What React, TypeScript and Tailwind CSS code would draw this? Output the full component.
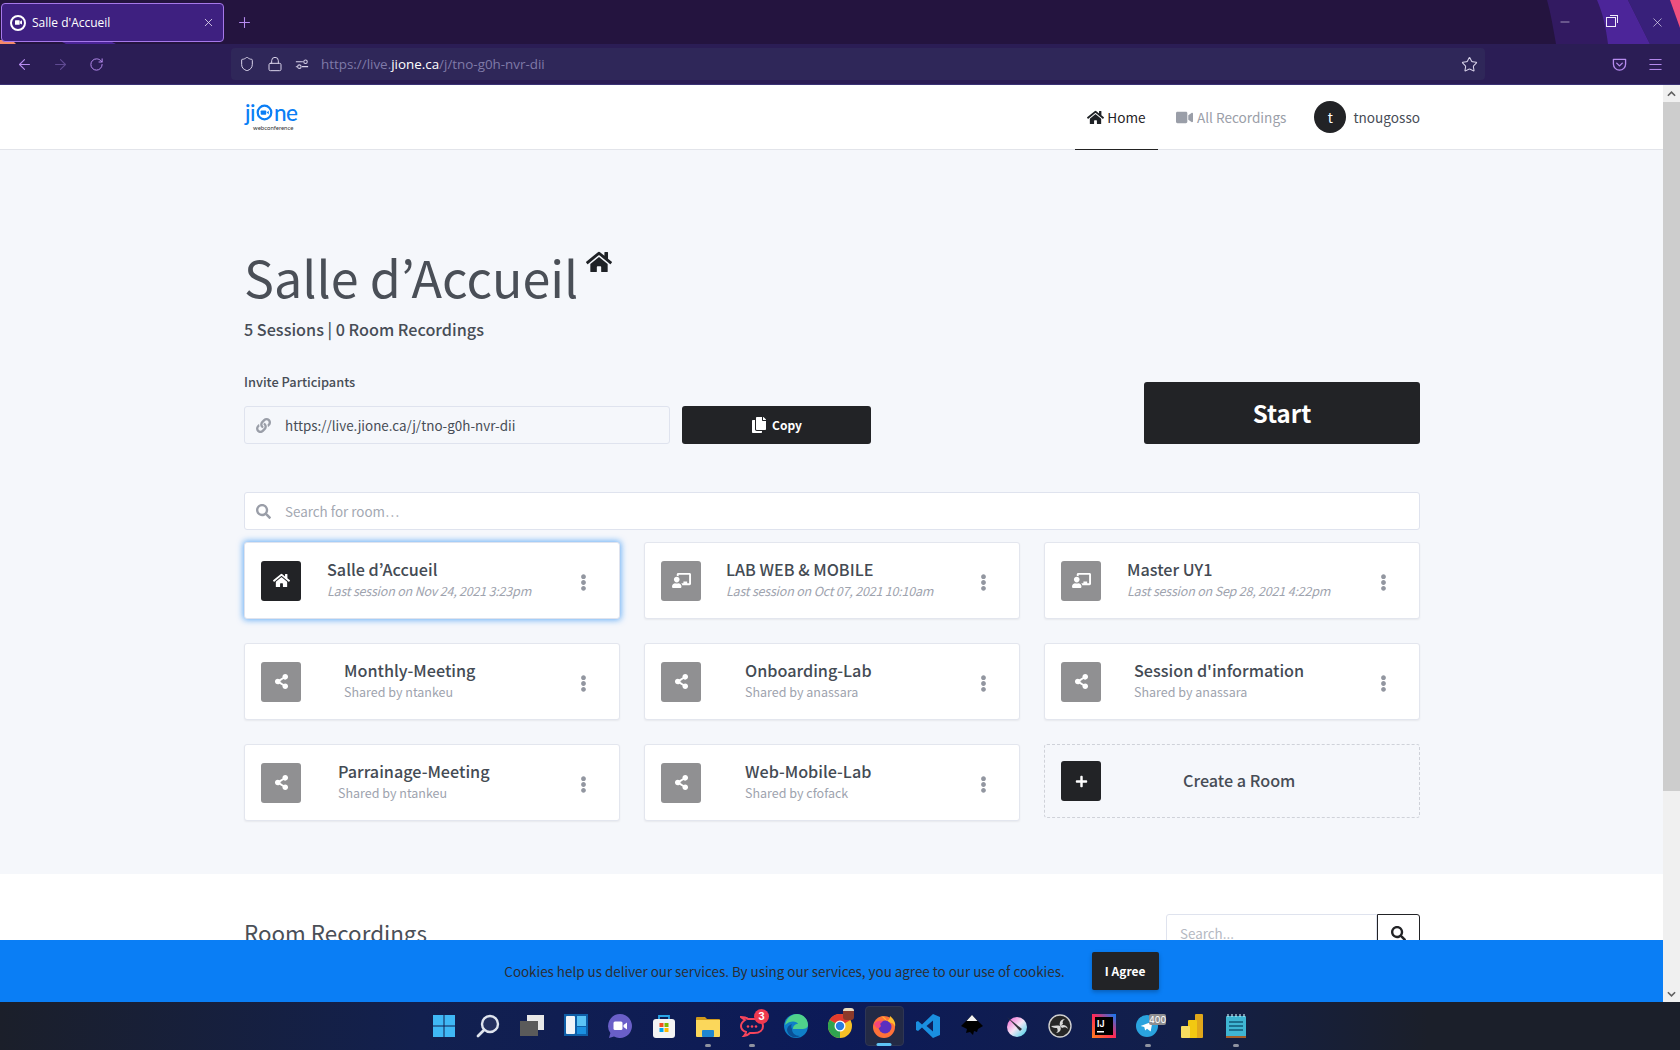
import { ArrowLeft, ArrowRight, Lock, Menu, Minus, Plus, RotateCw, Shield, Star, X } from "lucide-react";
import { FaChalkboardTeacher, FaCopy, FaEllipsisV, FaHome, FaLink, FaPlus, FaSearch, FaShareAlt, FaVideo } from "react-icons/fa";

const font = "font-['Noto_Sans_CJK_KR','Source_Sans_Pro',sans-serif]";

type Room = {
  name: string;
  sub: string;
  kind: "home" | "own" | "shared";
  textClass: string;
};

const rooms: Room[] = [
  { name: "Salle d’Accueil", sub: "Last session on Nov 24, 2021 3:23pm", kind: "home", textClass: "ml-[26px]" },
  { name: "LAB WEB & MOBILE", sub: "Last session on Oct 07, 2021 10:10am", kind: "own", textClass: "ml-[25px]" },
  { name: "Master UY1", sub: "Last session on Sep 28, 2021 4:22pm", kind: "own", textClass: "ml-[26px]" },
  { name: "Monthly-Meeting", sub: "Shared by ntankeu", kind: "shared", textClass: "ml-[43px]" },
  { name: "Onboarding-Lab", sub: "Shared by anassara", kind: "shared", textClass: "ml-[44px]" },
  { name: "Session d'information", sub: "Shared by anassara", kind: "shared", textClass: "ml-[33px]" },
  { name: "Parrainage-Meeting", sub: "Shared by ntankeu", kind: "shared", textClass: "ml-[37px]" },
  { name: "Web-Mobile-Lab", sub: "Shared by cfofack", kind: "shared", textClass: "ml-[44px]" },
];

function RoomCard({ room }: { room: Room }) {
  const isHome = room.kind === "home";
  return (
    <div
      className={
        isHome
          ? "h-[77px] flex items-center pl-[16px] bg-white rounded-[3px] border border-[#dfe3ee] shadow-[0_0_6px_1px_rgba(10,126,245,0.6)]"
          : "h-[77px] flex items-center pl-[16px] bg-white rounded-[3px] border border-[#e3e6ee] shadow-[0_1px_2px_rgba(0,0,0,0.06)]"
      }
    >
      <div
        className={
          isHome
            ? "w-10 h-10 shrink-0 rounded-[3px] bg-[#222326] text-white flex items-center justify-center"
            : "w-10 h-10 shrink-0 rounded-[3px] bg-[#909092] text-white flex items-center justify-center"
        }
      >
        {room.kind === "home" && <FaHome size={17} />}
        {room.kind === "own" && <FaChalkboardTeacher size={19} />}
        {room.kind === "shared" && <FaShareAlt size={15} />}
      </div>
      <div className={room.textClass + " flex-1 min-w-0 -mt-[4px]"}>
        <div className="text-[16.2px] leading-[24px] font-medium text-[#444b54] whitespace-nowrap">{room.name}</div>
        <div
          className={
            room.kind === "shared"
              ? "mt-[1px] text-[12.5px] leading-[18px] text-[#9ea3ae] whitespace-nowrap"
              : "mt-[1px] text-[12.5px] leading-[18px] italic text-[#9ea3ae] whitespace-nowrap tracking-[-0.2px]"
          }
        >
          {room.sub}
        </div>
      </div>
      <FaEllipsisV size={17} className="text-[#9296a0] shrink-0 mr-[27px] mt-[3px]" />
    </div>
  );
}

function JioneLogo() {
  return (
    <div className="relative w-[54px] h-[30px] font-['Lato',sans-serif] font-medium text-[#0a7ef5]">
      <div className="absolute left-[1px] top-0 flex items-center h-[24px] text-[22.5px] leading-[24px] tracking-[-0.5px]">
        <span>ji</span>
        <svg viewBox="0 0 20 20" className="w-[17px] h-[17px] mx-[1px]">
          <circle cx="10" cy="10" r="8" fill="none" stroke="#0a7ef5" strokeWidth="2.6" />
          <rect x="5.5" y="7.5" width="6.5" height="5" rx="1" fill="#0a7ef5" />
          <path d="M12.5 10l2.5-2v4z" fill="#0a7ef5" />
        </svg>
        <span>ne</span>
      </div>
      <div className="absolute left-[9px] top-[23px] text-[6px] leading-[7px] font-normal text-[#333] whitespace-nowrap">webconference</div>
    </div>
  );
}

function TaskIcon({ children, dot }: { children: React.ReactNode; dot?: boolean }) {
  return (
    <div className="relative w-[44px] h-full flex items-center justify-center shrink-0">
      {children}
      {dot && <div className="absolute bottom-[3px] left-1/2 -translate-x-1/2 w-[6px] h-[3px] rounded-full bg-[#8f93a0]" />}
    </div>
  );
}

function Taskbar() {
  return (
    <div className="h-[48px] shrink-0 flex justify-center bg-[linear-gradient(90deg,#1b1f2a_0%,#12204f_25%,#0c1a58_50%,#121f4a_70%,#1b1f2a_85%)]">
      <div className="flex h-full items-center">
        <TaskIcon>
          <svg viewBox="0 0 24 24" className="w-6 h-6">
            <path d="M1 1h10.5v10.5H1zM12.5 1H23v10.5H12.5zM1 12.5h10.5V23H1zM12.5 12.5H23V23H12.5z" fill="#3fb8f5" />
          </svg>
        </TaskIcon>
        <TaskIcon>
          <svg viewBox="0 0 24 24" className="w-6 h-6">
            <circle cx="14" cy="10" r="8" fill="#24305f" stroke="#dfe4ee" strokeWidth="2.4" />
            <path d="M8 16l-6 6" stroke="#dfe4ee" strokeWidth="2.8" strokeLinecap="round" />
          </svg>
        </TaskIcon>
        <TaskIcon>
          <svg viewBox="0 0 24 24" className="w-6 h-6">
            <rect x="7" y="1" width="17" height="15" fill="#e8e8e8" />
            <rect x="0" y="7" width="18" height="15" fill="#5a5a5a" />
          </svg>
        </TaskIcon>
        <TaskIcon>
          <svg viewBox="0 0 24 24" className="w-6 h-6">
            <rect x="0" y="0" width="24" height="22" fill="#0f5fa8" />
            <rect x="2" y="2" width="9" height="18" rx="1" fill="#f2f4f8" />
            <rect x="13" y="2" width="9" height="10" fill="#5cc4f5" />
            <rect x="13" y="13" width="9" height="7" fill="#1b90e0" />
          </svg>
        </TaskIcon>
        <TaskIcon>
          <svg viewBox="0 0 24 24" className="w-6 h-6">
            <path d="M12 0a12 12 0 1 1-6 22.4L1 24l1.4-5A12 12 0 0 1 12 0z" fill="#6a5fc8" />
            <rect x="5.5" y="7.5" width="9" height="8.5" rx="1.5" fill="#fff" />
            <path d="M15.5 11l3.5-2.5v7L15.5 13z" fill="#fff" />
          </svg>
        </TaskIcon>
        <TaskIcon>
          <svg viewBox="0 0 24 24" className="w-6 h-6">
            <path d="M7 6V2h10v4" fill="none" stroke="#2aa6e8" strokeWidth="1.8" />
            <rect x="1" y="5" width="22" height="19" rx="3" fill="#f4f4f4" />
            <rect x="7.5" y="9" width="4" height="4" fill="#f25022" />
            <rect x="12.5" y="9" width="4" height="4" fill="#7fba00" />
            <rect x="7.5" y="14" width="4" height="4" fill="#00a4ef" />
            <rect x="12.5" y="14" width="4" height="4" fill="#ffb900" />
          </svg>
        </TaskIcon>
        <TaskIcon dot>
          <svg viewBox="0 0 24 24" className="w-6 h-6">
            <path d="M0 4a1 1 0 0 1 1-1h8l2 2h12a1 1 0 0 1 1 1v4H0z" fill="#d09a1c" />
            <path d="M0 6h24v16a1 1 0 0 1-1 1H1a1 1 0 0 1-1-1z" fill="#fbd75b" />
            <rect x="6" y="16" width="12" height="7" rx="1" fill="#1f86d0" />
          </svg>
        </TaskIcon>
        <TaskIcon dot>
          <div className="relative w-6 h-6">
            <svg viewBox="0 0 24 24" className="w-6 h-6">
              <path d="M5 6C2 4 1 3 1 3c4 0 6 1 7 2h6c6 0 9 3 9 7s-3 7-9 7h-4c-2 2-4 3-6 3 1-1 2-3 2-4-3-1-5-3-5-6 0-2 1-4 4-6z" fill="none" stroke="#f5455c" strokeWidth="2" />
              <circle cx="8" cy="12.5" r="1.3" fill="#f5455c" />
              <circle cx="12" cy="12.5" r="1.3" fill="#f5455c" />
              <circle cx="16" cy="12.5" r="1.3" fill="#f5455c" />
            </svg>
            <div className="absolute -top-[5px] -right-[5px] w-[15px] h-[15px] rounded-full bg-[#f0394f] text-white text-[10px] leading-[15px] text-center font-bold font-['Inter',sans-serif]">3</div>
          </div>
        </TaskIcon>
        <TaskIcon>
          <svg viewBox="0 0 24 24" className="w-6 h-6">
            <circle cx="12" cy="12" r="12" fill="#0f7fc8" />
            <path d="M1 11C2 4 8 0 13 0c6 0 11 5 11 11 0 3-3 4-6 4H9c0-3 2-5 5-5-1-3-8-4-13 1z" fill="#4fd18b" />
            <path d="M8 15c0 4 3 7 8 7-6 3-12 0-13-6 0-3 2-5 5-6-1 1-1 3 0 5z" fill="#0a4f96" />
          </svg>
        </TaskIcon>
        <TaskIcon>
          <div className="relative w-6 h-6">
            <svg viewBox="0 0 24 24" className="w-6 h-6">
              <circle cx="12" cy="12" r="12" fill="#f6c026" />
              <path d="M12 12L1.6 6A12 12 0 0 1 22.4 6z" fill="#e33b2e" />
              <path d="M12 12L1.6 6A12 12 0 0 0 12 24z" fill="#2fa44f" />
              <circle cx="12" cy="12" r="5.5" fill="#fff" />
              <circle cx="12" cy="12" r="4.2" fill="#2a7de1" />
            </svg>
            <div className="absolute -top-[6px] right-[-2px] w-[11px] h-[12px] rounded-[3px] bg-[#8c3a2a] border-t-[3px] border-[#e8dcc0]" />
          </div>
        </TaskIcon>
        <div className="relative w-[44px] h-full flex items-center justify-center shrink-0">
          <div className="absolute left-[3px] right-[2px] top-[4px] bottom-[4px] rounded-[4px] bg-[#232a45] border border-[#2f3654]" />
          <svg viewBox="0 0 24 24" className="relative w-6 h-6">
            <circle cx="12" cy="13" r="11" fill="#ff7139" />
            <path d="M9 2c4 1 5 3 6 5 2-1 3-3 3-5 4 3 6 7 5 11-1-4-4-5-6-4z" fill="#ffbd2e" />
            <circle cx="13" cy="13" r="6.5" fill="#5b2fbf" />
            <path d="M2 10c2-3 5-4 9-3l-3 3c2 2 0 4-2 4s-3-2-4-4z" fill="#f5467b" />
          </svg>
          <div className="absolute bottom-[4px] left-1/2 -translate-x-1/2 w-[15px] h-[3px] rounded-full bg-[#5fc3f5]" />
        </div>
        <TaskIcon>
          <svg viewBox="0 0 24 24" className="w-6 h-6">
            <path d="M17 0l7 3v18l-7 3L6 13.5 2 17l-2-1V8l2-1 4 3.5z" fill="#1a8fe0" />
            <path d="M17 6.5L10.5 12l6.500 5.500z" fill="#0d1f5c" />
          </svg>
        </TaskIcon>
        <TaskIcon>
          <svg viewBox="0 0 24 24" className="w-6 h-6">
            <path d="M12 1L23 12l-5 3-1 3-3-1-1 4-3-3-4 1 1-4-6-3z" fill="#000" />
            <path d="M12 1L17.5 7H6.5z" fill="#f2f2f2" />
          </svg>
        </TaskIcon>
        <TaskIcon>
          <svg viewBox="0 0 24 24" className="w-6 h-6">
            <defs>
              <linearGradient id="krita" x1="0" y1="0" x2="1" y2="1">
                <stop offset="0" stopColor="#f25ccf" />
                <stop offset="0.5" stopColor="#f5e6f5" />
                <stop offset="1" stopColor="#35d2e8" />
              </linearGradient>
            </defs>
            <circle cx="13" cy="13" r="10" fill="url(#krita)" />
            <path d="M3 3l15 12-2 2z" fill="#33333c" />
          </svg>
        </TaskIcon>
        <TaskIcon>
          <svg viewBox="0 0 24 24" className="w-6 h-6">
            <circle cx="12" cy="12" r="11" fill="#262626" stroke="#cfcfcf" strokeWidth="1.4" />
            <path d="M12 12c-1-4 1-7 5-7-2 1-3 3-2 5zM12 12c3-2 7-1 8 3-2-2-4-2-6-1zM12 12c2 3 0 7-4 7 2-1 2-3 1-5-2 0-4 0-6-2 3 0 6-1 9 0z" fill="#d8d8d8" />
          </svg>
        </TaskIcon>
        <TaskIcon>
          <svg viewBox="0 0 24 24" className="w-6 h-6">
            <defs>
              <linearGradient id="idea" x1="0" y1="1" x2="1" y2="0">
                <stop offset="0" stopColor="#fc801d" />
                <stop offset="0.5" stopColor="#fe2857" />
                <stop offset="1" stopColor="#087cfa" />
              </linearGradient>
            </defs>
            <rect x="0" y="0" width="24" height="24" fill="url(#idea)" />
            <rect x="3" y="3" width="18" height="18" fill="#000" />
            <text x="5" y="13" fontSize="8.5" fontWeight="700" fill="#fff" fontFamily="Inter, sans-serif">IJ</text>
            <rect x="5" y="17" width="7" height="1.5" fill="#fff" />
          </svg>
        </TaskIcon>
        <TaskIcon dot>
          <div className="relative w-6 h-6">
            <svg viewBox="0 0 24 24" className="w-[22px] h-[22px] mt-[1px]">
              <circle cx="12" cy="12" r="12" fill="#2aa3de" />
              <path d="M5 12l13-5-2 11-4-3-2 2-1-4z" fill="#fff" />
            </svg>
            <div className="absolute top-0 left-[13px] w-[17px] h-[11px] rounded-[2px] bg-[#8e8e90] text-white text-[9px] leading-[11px] text-center font-['Inter',sans-serif]">400</div>
          </div>
        </TaskIcon>
        <TaskIcon>
          <svg viewBox="0 0 24 24" className="w-6 h-6">
            <rect x="15" y="0" width="8" height="24" rx="1" fill="#e0a71a" />
            <rect x="8" y="6" width="9" height="18" rx="1" fill="#f2c811" />
            <rect x="1" y="12" width="9" height="12" rx="1" fill="#f7dd60" />
          </svg>
        </TaskIcon>
        <TaskIcon dot>
          <svg viewBox="0 0 24 24" className="w-6 h-6">
            <rect x="2" y="2" width="20" height="22" rx="1" fill="#3fb6d3" />
            <rect x="2" y="22" width="20" height="2" fill="#a5602a" />
            <path d="M5 8h14M5 12h14M5 16h14" stroke="#125a78" strokeWidth="1.6" />
            <path d="M4 0v3M8 0v3M12 0v3M16 0v3M20 0v3" stroke="#bfe8f2" strokeWidth="1.2" />
          </svg>
        </TaskIcon>
      </div>
    </div>
  );
}

function BrowserChrome() {
  return (
    <div className="h-[85px] shrink-0 font-['Open_Sans',sans-serif]">
      <div className="relative h-[44px] bg-[#24143f] flex items-start overflow-hidden">
        <svg viewBox="0 0 133 44" className="absolute right-0 top-0 w-[133px] h-[44px]">
          <path d="M0 0h133v44H9C6 28 4 14 0 0z" fill="#321a61" />
          <path d="M50 0h31l22 44H61C59 28 56 14 50 0z" fill="#4c2599" />
          <path d="M81 0h42l10 28v16h-30z" fill="#38207a" />
          <path d="M123 0h10v28z" fill="#f0507f" />
        </svg>
        <svg viewBox="0 0 120 6" className="absolute left-0 bottom-0 w-[120px] h-[6px]">
          <path d="M0 2h12l4 4H0z" fill="#f58a6a" />
          <path d="M60 3h50l6 3H66z" fill="#4c2599" />
        </svg>
        <div className="relative ml-[1px] mt-[3px] w-[223px] h-[39px] rounded-[4px] border border-[#a678ea] bg-[#3e2080] flex items-center pl-[8px] pr-[8px] text-white">
          <div className="w-[16px] h-[16px] rounded-full border-[2.5px] border-white flex items-center justify-center">
            <FaVideo size={7} />
          </div>
          <span className="ml-[6px] text-[12px] flex-1">Salle d'Accueil</span>
          <X size={13} strokeWidth={1.5} className="text-[#e8e0f5]" />
        </div>
        <Plus size={17} strokeWidth={1.5} className="relative ml-[12px] mt-[14px] text-[#b78cf0]" />
        <div className="absolute top-0 right-0 h-[44px] flex items-center text-[#f2eefa]">
          <div className="w-[46px] flex justify-center"><Minus size={14} strokeWidth={1} /></div>
          <div className="w-[46px] flex justify-center">
            <div className="relative w-[10px] h-[10px] border border-[#f2eefa]">
              <div className="absolute -top-[3px] -right-[3px] w-[8px] h-[8px] border-t border-r border-[#f2eefa]" />
            </div>
          </div>
          <div className="w-[46px] flex justify-center"><X size={15} strokeWidth={1} /></div>
        </div>
      </div>
      <div className="h-[41px] bg-[#2b1d55] border-b border-[#3b3274] flex items-center text-[#b78cf0]">
        <ArrowLeft size={17} strokeWidth={1.5} className="ml-[16px]" />
        <ArrowRight size={17} strokeWidth={1.5} className="ml-[19px] text-[#5f4a92]" />
        <RotateCw size={15} strokeWidth={1.6} className="ml-[20px]" />
        <div className="ml-[127px] w-[1254px] h-[32px] rounded-[4px] bg-[#2f2759] flex items-center text-[#d9d3ea]">
          <Shield size={16} strokeWidth={1.5} className="ml-[8px]" />
          <Lock size={16} strokeWidth={1.5} className="ml-[12px]" />
          <svg viewBox="0 0 16 16" className="ml-[12px] w-[14px] h-[14px]" fill="none" stroke="currentColor" strokeWidth="1.2">
            <path d="M1 5.5h8M1 11h1M8 11h7" />
            <circle cx="12" cy="5.5" r="2" />
            <circle cx="5" cy="11" r="2" />
          </svg>
          <div className="ml-[12px] text-[13.4px] text-[#7f7aa8] whitespace-nowrap flex-1">
            https://live.<span className="text-white">jione.ca</span>/j/tno-g0h-nvr-dii
          </div>
          <Star size={17} strokeWidth={1.5} className="mr-[7px]" />
        </div>
        <svg viewBox="0 0 16 16" className="ml-[127px] w-[15px] h-[15px]" fill="none" stroke="currentColor" strokeWidth="1.4">
          <path d="M1.5 2.5h13v5a6.5 6.5 0 0 1-13 0z" strokeLinejoin="round" />
          <path d="M5 6.5l3 3 3-3" strokeLinecap="round" strokeLinejoin="round" />
        </svg>
        <Menu size={17} strokeWidth={1.4} className="ml-[20px]" />
      </div>
    </div>
  );
}

export default function App() {
  return (
    <div className={"h-screen w-full overflow-hidden flex flex-col bg-white " + font}>
      <BrowserChrome />
      <div className="relative flex-1 min-h-0 flex overflow-hidden">
        <div className="flex-1 min-w-0 overflow-hidden">
          <nav className="h-[65px] bg-white border-b border-[#e2e4ea]">
            <div className="w-[1176px] ml-[244px] h-full flex items-center">
              <div className="-mt-[3px]"><JioneLogo /></div>
              <div className="ml-auto flex h-full items-stretch text-[13.6px]">
                <div className="w-[83px] flex items-center justify-center gap-[3px] text-[#1f2226] border-b border-[#222] -mb-[1px]">
                  <FaHome size={17} />
                  <span>Home</span>
                </div>
                <div className="ml-[18px] flex items-center gap-[4px] text-[#9a9ea8]">
                  <FaVideo size={17} />
                  <span>All Recordings</span>
                </div>
                <div className="ml-[28px] flex items-center">
                  <div className="w-8 h-8 rounded-full bg-[#222326] text-white text-[13.6px] flex items-center justify-center">t</div>
                  <span className="ml-[7px] text-[#474d56]">tnougosso</span>
                </div>
              </div>
            </div>
          </nav>
          <section className="bg-[#f5f7fb] pt-[96px] pb-[53px]">
            <div className="w-[1176px] ml-[244px]">
              <div className="flex items-start h-[64px]">
                <h1 className="text-[50.2px] leading-[64px] -mt-[2px] font-normal text-[#4a4f57] whitespace-nowrap">Salle d’Accueil</h1>
                <FaHome size={26} className="ml-[8px] mt-[3px] text-[#1f2226]" />
              </div>
              <div className="mt-[7px] text-[16.2px] leading-[24px] font-medium text-[#474d56]">5 Sessions | 0 Room Recordings</div>
              <div className="mt-[31px] flex items-end justify-between">
                <div>
                  <div className="text-[12.8px] leading-[20px] font-medium text-[#474d56]">Invite Participants</div>
                  <div className="mt-[14px] flex gap-[12px]">
                    <div className="w-[426px] h-[38px] flex items-center rounded-[3px] border border-[#dfe3ee] bg-[#f5f7fb] text-[13.4px] text-[#474d56]">
                      <FaLink size={15} className="ml-[11px] text-[#9a9ea8]" />
                      <span className="ml-[14px]">https://live.jione.ca/j/tno-g0h-nvr-dii</span>
                    </div>
                    <div className="w-[189px] h-[38px] rounded-[3px] bg-[#222326] text-white flex items-center justify-center gap-[5px] text-[12px] font-bold">
                      <FaCopy size={16} />
                      <span>Copy</span>
                    </div>
                  </div>
                </div>
                <div className="w-[276px] h-[62px] rounded-[3px] bg-[#222326] text-white flex items-center justify-center text-[24px] font-bold">Start</div>
              </div>
              <div className="mt-[48px] h-[38px] flex items-center rounded-[3px] border border-[#dfe3ee] bg-white text-[13.4px] text-[#a3a8b2]">
                <FaSearch size={15} className="ml-[11px] text-[#9a9ea8]" />
                <span className="ml-[14px]">Search for room…</span>
              </div>
              <div className="mt-[12px] grid grid-cols-3 gap-x-[24px] gap-y-[24px]">
                {rooms.map((room) => (
                  <RoomCard key={room.name} room={room} />
                ))}
                <div className="h-[74px] flex items-center pl-[16px] rounded-[3px] border border-dashed border-[#cfd2d9]">
                  <div className="w-10 h-10 shrink-0 rounded-[3px] bg-[#222326] text-white flex items-center justify-center">
                    <FaPlus size={13} />
                  </div>
                  <span className="ml-[82px] text-[16.2px] -mt-[2px] font-medium text-[#474d56]">Create a Room</span>
                </div>
              </div>
            </div>
          </section>
          <section className="bg-white pt-[40px]">
            <div className="w-[1176px] ml-[244px] flex items-start justify-between">
              <h2 className="text-[22.4px] leading-[40px] -mt-[2px] text-[#4a4f57]">Room Recordings</h2>
              <div className="flex h-[38px]">
                <div className="w-[211px] rounded-l-[3px] border border-[#dfe3ee] flex items-center pl-[13px] text-[13.4px] text-[#b5b9c2]">Search...</div>
                <div className="w-[43px] rounded-r-[3px] border border-[#222326] flex items-center justify-center text-[#222326]">
                  <FaSearch size={15} />
                </div>
              </div>
            </div>
          </section>
        </div>
        <div className="w-[17px] shrink-0 bg-[#f0f0f0] flex flex-col items-center">
          <div className="h-[17px] flex items-center justify-center">
            <svg viewBox="0 0 10 6" className="w-[9px] h-[6px]" fill="none" stroke="#606060" strokeWidth="1.8"><path d="M1 5l4-4 4 4" /></svg>
          </div>
          <div className="w-full h-[689px] bg-[#cdcdcd]" />
          <div className="mt-auto h-[17px] flex items-center justify-center">
            <svg viewBox="0 0 10 6" className="w-[9px] h-[6px]" fill="none" stroke="#606060" strokeWidth="1.8"><path d="M1 1l4 4 4-4" /></svg>
          </div>
        </div>
        <div className="absolute left-0 right-[17px] bottom-0 h-[62px] bg-[#0a7ef5] flex items-center justify-center gap-[27px]">
          <span className="text-[13.4px] text-[#2a2d33]">Cookies help us deliver our services. By using our services, you agree to our use of cookies.</span>
          <div className="w-[67px] h-[38px] rounded-[2px] bg-[#222326] text-white text-[12px] font-bold flex items-center justify-center shadow-[0_2px_4px_rgba(0,0,0,0.25)]">I Agree</div>
        </div>
      </div>
      <Taskbar />
    </div>
  );
}
